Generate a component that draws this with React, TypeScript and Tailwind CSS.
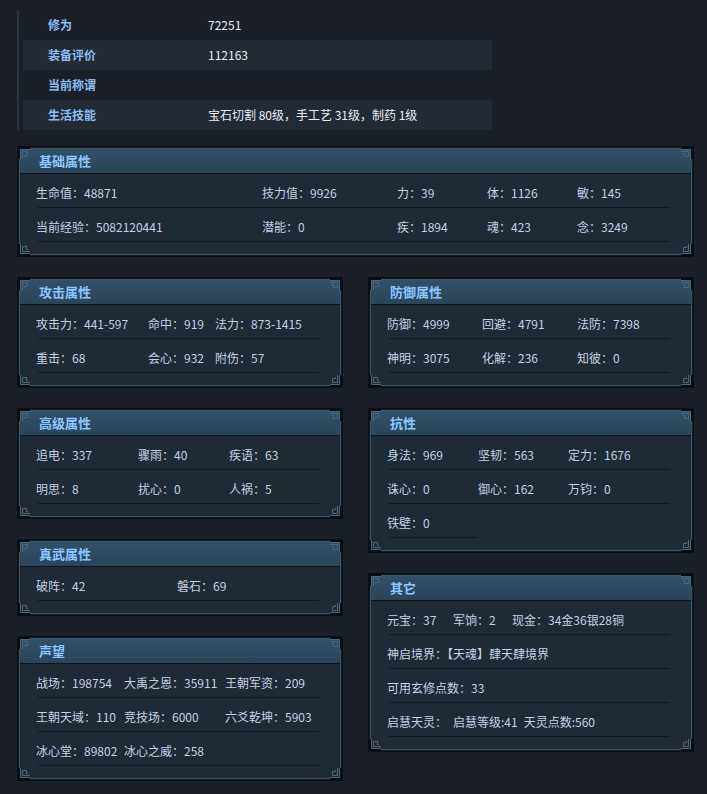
import type { ReactNode } from 'react';

const FONT = "font-['Noto_Sans_CJK_SC','Noto_Sans',sans-serif]";

const TOP_ROWS = [
  { label: '修为', value: '72251' },
  { label: '装备评价', value: '112163' },
  { label: '当前称谓', value: '' },
  { label: '生活技能', value: '宝石切割 80级，手工艺 31级，制药 1级' },
];

function Corner({ pos }: { pos: string }) {
  return (
    <svg width="12" height="12" viewBox="0 0 12 12" className={`pointer-events-none absolute ${pos}`}>
      <path d="M0 0H12V2H2V12H0Z" fill="#090e13" />
      <path d="M2.5 12V2.5H12" stroke="#4a6879" fill="none" />
      <path d="M4.5 12V4.5H9.5V8.5H6.5V10" stroke="#4a6879" fill="none" />
    </svg>
  );
}

function Panel({ title, children }: { title: string; children: ReactNode }) {
  return (
    <div className="relative border border-[#090e13] bg-[#141c24] p-px">
      <div className="border border-[#3a5566] bg-[#1e2a34]">
        <div className="flex h-[25px] items-center border-b border-[#0c1419] bg-gradient-to-b from-[#31506a] to-[#2a4558] pl-[19px] text-[13px] font-bold leading-[14px] text-[#8ec6ff]">
          {title}
        </div>
        <div className="pb-[12px] pl-[16px] pr-[21px]">{children}</div>
      </div>
      <Corner pos="left-0 top-0" />
      <Corner pos="right-0 top-0 rotate-90" />
      <Corner pos="right-0 bottom-0 rotate-180" />
      <Corner pos="left-0 bottom-0 -rotate-90" />
    </div>
  );
}

function Row({ cols, cells, sep = '' }: { cols: string; cells: ReactNode[]; sep?: string }) {
  return (
    <>
      <div className={`grid h-[33px] items-center pt-[5px] ${cols}`}>
        {cells.map((c, i) => (
          <span key={i} className="whitespace-nowrap">{c}</span>
        ))}
      </div>
      <div className={`ml-[2px] h-px bg-[#0f181e] ${sep}`} />
    </>
  );
}

export default function App() {
  return (
    <div className={`h-[794px] w-[707px] overflow-hidden bg-[#1b2028] text-[12px] leading-[14px] text-[#c3d1e3] ${FONT}`}>
      {/* 角色信息 */}
      <div className="ml-[17px] mt-[10px] w-[475px] border-l-2 border-[#2b333d] pl-[4px]">
        {TOP_ROWS.map((r, i) => (
          <div key={r.label} className={`grid h-[30px] grid-cols-[185px_1fr] items-center ${i % 2 === 1 ? 'bg-[#222a34]' : ''}`}>
            <span className="pl-[25px] font-bold text-[#8abdf4]">{r.label}</span>
            <span className="text-[#e8eef5]">{r.value}</span>
          </div>
        ))}
      </div>

      <div className="mt-[16px] ml-[17px] w-[677px]">
        <Panel title="基础属性">
          <Row cols="grid-cols-[226px_135px_90px_90px_1fr]" cells={['生命值：48871', '技力值：9926', '力：39', '体：1126', '敏：145']} />
          <Row cols="grid-cols-[226px_135px_90px_90px_1fr]" cells={['当前经验：5082120441', '潜能：0', '疾：1894', '魂：423', '念：3249']} />
        </Panel>

        <div className="mt-[20px] grid grid-cols-[326px_326px] items-start gap-x-[25px]">
          <div className="flex flex-col gap-[20px]">
            <Panel title="攻击属性">
              <Row cols="grid-cols-[112px_67px_1fr]" cells={['攻击力：441-597', '命中：919', '法力：873-1415']} />
              <Row cols="grid-cols-[112px_67px_1fr]" cells={['重击：68', '会心：932', '附伤：57']} />
            </Panel>
            <Panel title="高级属性">
              <Row cols="grid-cols-[102px_91px_1fr]" cells={['追电：337', '骤雨：40', '疾语：63']} />
              <Row cols="grid-cols-[102px_91px_1fr]" cells={['明思：8', '扰心：0', '人祸：5']} />
            </Panel>
            <Panel title="真武属性">
              <Row cols="grid-cols-[141px_1fr]" cells={['破阵：42', '磐石：69']} />
            </Panel>
            <Panel title="声望">
              <Row cols="grid-cols-[88px_101px_1fr]" cells={['战场：198754', '大禹之恩：35911', '王朝军资：209']} />
              <Row cols="grid-cols-[88px_101px_1fr]" cells={['王朝天域：110', '竞技场：6000', '六爻乾坤：5903']} />
              <Row cols="grid-cols-[88px_101px_1fr]" cells={['冰心堂：89802', '冰心之威：258']} />
            </Panel>
          </div>

          <div className="flex flex-col gap-[20px]">
            <Panel title="防御属性">
              <Row cols="grid-cols-[95px_95px_1fr]" cells={['防御：4999', '回避：4791', '法防：7398']} />
              <Row cols="grid-cols-[95px_95px_1fr]" cells={['神明：3075', '化解：236', '知彼：0']} />
            </Panel>
            <Panel title="抗性">
              <Row cols="grid-cols-[91px_90px_1fr]" cells={['身法：969', '坚韧：563', '定力：1676']} />
              <Row cols="grid-cols-[91px_90px_1fr]" cells={['诛心：0', '御心：162', '万钧：0']} />
              <Row cols="grid-cols-[91px_90px_1fr]" cells={['铁壁：0']} sep="w-[89px]" />
            </Panel>
            <Panel title="其它">
              <Row cols="grid-cols-[66px_59px_1fr]" cells={['元宝：37', '军饷：2', '现金：34金36银28铜']} />
              <Row cols="grid-cols-[1fr]" cells={['神启境界：【天魂】肆天肆境界']} />
              <Row cols="grid-cols-[1fr]" cells={['可用玄修点数：33']} />
              <Row
                cols="grid-cols-[1fr]"
                cells={[
                  <>
                    启慧天灵：<span className="ml-[6px]">启慧等级:41</span>
                    <span className="ml-[6px]">天灵点数:560</span>
                  </>,
                ]}
              />
            </Panel>
          </div>
        </div>
      </div>
    </div>
  );
}
